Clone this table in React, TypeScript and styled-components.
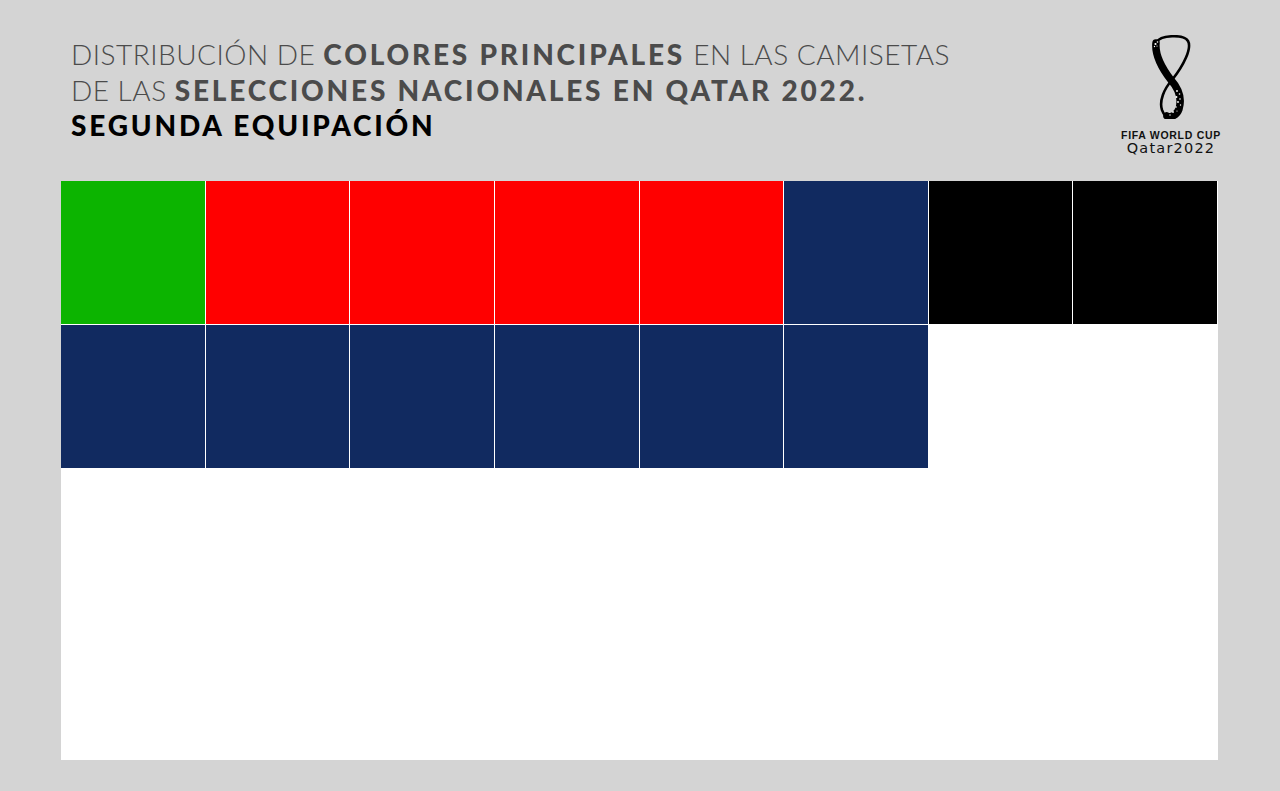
import React from "react";
import styled, { createGlobalStyle } from "styled-components";

const GlobalStyle = createGlobalStyle`
  html, body {
    margin: 0;
    padding: 0;
    background: #d4d4d4;
  }
  body {
    font-family: Lato, "Open Sans", sans-serif;
  }
`;

const Page = styled.div`
  width: 1280px;
  height: 791px;
  background: #d4d4d4;
  overflow: hidden;
`;

const Header = styled.header`
  display: flex;
  justify-content: space-between;
  align-items: flex-start;
  height: 181px;
  box-sizing: border-box;
  padding: 37px 58px 0 71px;
`;

const Title = styled.h1`
  margin: 0;
  font-family: Lato, "Open Sans", sans-serif;
  font-size: 28px;
  line-height: 35.5px;
  font-weight: 300;
  color: #4b4b4b;
  letter-spacing: 0.5px;
`;

const Line = styled.div<{ $dark?: boolean }>`
  white-space: nowrap;
  color: ${(p) => (p.$dark ? "#000" : "#4b4b4b")};
`;

const Strong = styled.span`
  font-weight: 900;
  letter-spacing: 2.8px;
`;

const Logo = styled.div`
  display: flex;
  flex-direction: column;
  align-items: center;
  width: 102px;
  margin-top: -2px;
`;

const Emblem = styled.svg`
  width: 40px;
  height: 84px;
  display: block;
`;

const LogoTitle = styled.div`
  margin-top: 11px;
  font-family: "Liberation Sans", Arial, sans-serif;
  font-weight: 700;
  font-size: 10.5px;
  line-height: 10px;
  letter-spacing: 0.7px;
  color: #111;
  white-space: nowrap;
`;

const LogoYear = styled.div`
  margin-top: 1px;
  font-family: "DejaVu Sans", sans-serif;
  font-size: 14.5px;
  line-height: 15px;
  color: #111;
  letter-spacing: 1.2px;
  white-space: nowrap;
`;

const Panel = styled.section`
  margin-left: 61px;
  width: 1157px;
  height: 579px;
  background: #ffffff;
`;

const Grid = styled.div`
  display: grid;
  grid-template-columns: repeat(8, 1fr);
  grid-auto-rows: 143px;
  gap: 1px;
  width: 1156px;
`;

const Cell = styled.div<{ $color: string }>`
  background: ${(p) => p.$color};
`;

const GREEN = "#0cb400";
const RED = "#ff0000";
const NAVY = "#112a60";
const BLACK = "#000000";

const kits = [
  GREEN, RED, RED, RED, RED, NAVY, BLACK, BLACK,
  NAVY, NAVY, NAVY, NAVY, NAVY, NAVY,
];

const dots: [number, number, number][] = [
  [4.5, 9, 1.1], [6.5, 7, 0.8], [3.5, 11.5, 0.7], [6, 11, 0.6],
  [26, 56, 0.9], [28.5, 59, 0.8], [25.5, 62, 0.9], [29, 64, 0.8],
  [27, 67, 0.9], [29.5, 70, 0.7], [25, 72, 0.8], [22, 77, 0.9],
  [19, 80, 0.7], [26, 76, 0.6],
];

const QatarEmblem = () => (
  <Emblem viewBox="0 0 40 84">
    <path
      d="M6 7 C 9 0, 33 -1, 37 6 C 41 13, 33 30, 21 45 C 13 54, 8 66, 11 75 C 13 80, 15 82, 17 82"
      fill="none"
      stroke="#000"
      strokeWidth="2.6"
      strokeLinecap="round"
    />
    <path
      d="M5 8 C 4 18, 10 32, 20 45 C 28 54, 31 64, 28 74 C 26 80, 20 83, 16 81"
      fill="none"
      stroke="#000"
      strokeWidth="7.5"
      strokeLinecap="round"
    />
    {dots.map(([x, y, r], i) => (
      <circle key={i} cx={x} cy={y} r={r} fill="#fff" />
    ))}
  </Emblem>
);

export default function App() {
  return (
    <Page>
      <GlobalStyle />
      <Header>
        <Title>
          <Line>
            DISTRIBUCIÓN DE <Strong>COLORES PRINCIPALES</Strong> EN LAS CAMISETAS
          </Line>
          <Line>
            DE LAS <Strong>SELECCIONES NACIONALES EN QATAR 2022.</Strong>
          </Line>
          <Line $dark>
            <Strong>SEGUNDA EQUIPACIÓN</Strong>
          </Line>
        </Title>
        <Logo>
          <QatarEmblem />
          <LogoTitle>FIFA WORLD CUP</LogoTitle>
          <LogoYear>Qatar2022</LogoYear>
        </Logo>
      </Header>
      <Panel>
        <Grid>
          {kits.map((c, i) => (
            <Cell key={i} $color={c} />
          ))}
        </Grid>
      </Panel>
    </Page>
  );
}
